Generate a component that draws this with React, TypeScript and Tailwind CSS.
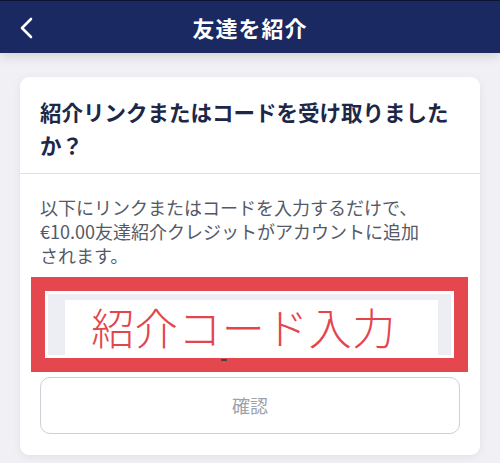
const font = { fontFamily: '"Noto Sans CJK JP", "Noto Sans", sans-serif' }

const BackIcon = () => (
  <svg width="16" height="24" viewBox="0 0 16 24" fill="none">
    <path d="M12 3 L3 12 L12 21" stroke="white" strokeWidth="2.6" strokeLinecap="round" strokeLinejoin="round" />
  </svg>
)

const App = () => {
  return (
    <div className="h-[463px] w-[500px] overflow-hidden bg-[#f1f1f5]" style={font}>
      <div className="relative flex h-[53px] items-center justify-center border-t border-[#0d1535] bg-[#1a2962] shadow-[0_4px_10px_rgba(0,0,0,0.12)]">
        <button className="absolute left-[19px] top-[15px]">
          <BackIcon />
        </button>
        <h1 className="text-[22px] font-bold tracking-[1px] text-white">友達を紹介</h1>
      </div>

      <div className="mx-[20px] mt-[24px] rounded-[9px] bg-white shadow-[0_2px_8px_rgba(20,30,80,0.08)]">
        <div className="px-[20px] pb-[12px] pt-[18px]">
          <h2 className="text-[21.5px] font-bold leading-[33px] text-[#1d2748]">
            紹介リンクまたはコードを受け取りました
            <br />
            か？
          </h2>
        </div>
        <div className="h-px bg-[#dfe1e8]" />
        <div className="px-[20px] pb-[21px] pt-[21px]">
          <p className="text-[18px] leading-[24px] text-[#545967]">
            以下にリンクまたはコードを入力するだけで、
            <br />
            €10.00友達紹介クレジットがアカウントに追加
            <br />
            されます。
          </p>

          <div className="relative mt-[10px] ml-[-9px] w-[437px] border-[14px] border-[#e5474f] bg-white p-[3px]">
            <div className="flex h-[61px] bg-[#eceef3] pl-[17px] pr-[13px] pt-[6px]">
              <div className="flex flex-1 items-center justify-center bg-white pb-[2px] pr-[16px]">
                <span className="text-[43px] font-light leading-none tracking-[0.5px] text-[#e3454d]">
                  紹介コード入力
                </span>
              </div>
            </div>
            <div className="absolute bottom-[-3px] left-[176px] h-[2px] w-[6px] bg-[#444]" />
          </div>

          <button className="mt-[5px] flex h-[57px] w-full items-center justify-center rounded-[10px] border border-[#cdd0d7] bg-white text-[18px] text-[#9ea2ab]">
            確認
          </button>
        </div>
      </div>
    </div>
  )
}

export default App
